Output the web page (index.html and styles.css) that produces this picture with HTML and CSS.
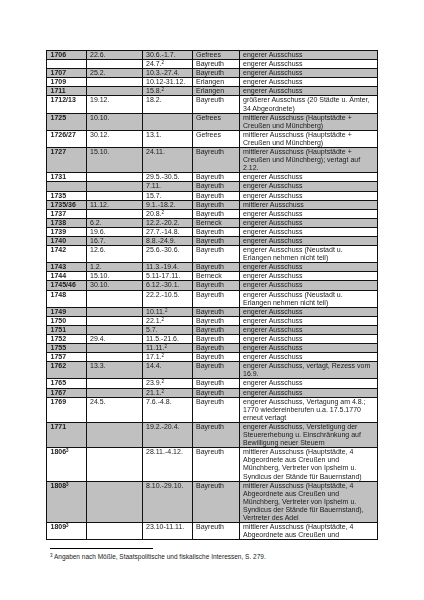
FILE: index.html
```html
<!DOCTYPE html>
<html lang="de">
<head>
<meta charset="utf-8">
<title>Landtage</title>
<link rel="stylesheet" href="styles.css">
</head>
<body>
<div class="page">
<table class="tbl">
<colgroup><col class="c1"><col class="c2"><col class="c3"><col class="c4"><col class="c5"></colgroup>
<tr class="g"><td class="y">1706</td><td>22.6.</td><td>30.6.-1.7.</td><td>Gefrees</td><td>engerer Ausschuss</td></tr>
<tr><td class="y"></td><td></td><td>24.7.<sup>2</sup></td><td>Bayreuth</td><td>engerer Ausschuss</td></tr>
<tr class="g"><td class="y">1707</td><td>25.2.</td><td>10.3.-27.4.</td><td>Bayreuth</td><td>engerer Ausschuss</td></tr>
<tr><td class="y">1709</td><td></td><td>10.12-31.12.</td><td>Erlangen</td><td>engerer Ausschuss</td></tr>
<tr class="g"><td class="y">1711</td><td></td><td>15.8.<sup>2</sup></td><td>Erlangen</td><td>engerer Ausschuss</td></tr>
<tr><td class="y">1712/13</td><td>19.12.</td><td>18.2.</td><td>Bayreuth</td><td>größerer Ausschuss (20 Städte u. Ämter,<br>34 Abgeordnete)</td></tr>
<tr class="g"><td class="y">1725</td><td>10.10.</td><td></td><td>Gefrees</td><td>mittlerer Ausschuss (Hauptstädte +<br>Creußen und Münchberg)</td></tr>
<tr><td class="y">1726/27</td><td>30.12.</td><td>13.1.</td><td>Gefrees</td><td>mittlerer Ausschuss (Hauptstädte +<br>Creußen und Münchberg)</td></tr>
<tr class="g"><td class="y">1727</td><td>15.10.</td><td>24.11.</td><td>Bayreuth</td><td>mittlerer Ausschuss (Hauptstädte +<br>Creußen und Münchberg); vertagt auf<br>2.12.</td></tr>
<tr><td class="y">1731</td><td></td><td>29.5.-30.5.</td><td>Bayreuth</td><td>engerer Ausschuss</td></tr>
<tr class="g"><td class="y"></td><td></td><td>7.11.</td><td>Bayreuth</td><td>engerer Ausschuss</td></tr>
<tr><td class="y">1735</td><td></td><td>15.7.</td><td>Bayreuth</td><td>engerer Ausschuss</td></tr>
<tr class="g"><td class="y">1735/36</td><td>11.12.</td><td>9.1.-18.2.</td><td>Bayreuth</td><td>mittlerer Ausschuss</td></tr>
<tr><td class="y">1737</td><td></td><td>20.8.<sup>2</sup></td><td>Bayreuth</td><td>engerer Ausschuss</td></tr>
<tr class="g"><td class="y">1738</td><td>6.2.</td><td>12.2.-20.2.</td><td>Berneck</td><td>engerer Ausschuss</td></tr>
<tr><td class="y">1739</td><td>19.6.</td><td>27.7.-14.8.</td><td>Bayreuth</td><td>engerer Ausschuss</td></tr>
<tr class="g"><td class="y">1740</td><td>16.7.</td><td>8.8.-24.9.</td><td>Bayreuth</td><td>engerer Ausschuss</td></tr>
<tr><td class="y">1742</td><td>12.6.</td><td>25.6.-30.6.</td><td>Bayreuth</td><td>engerer Ausschuss (Neustadt u.<br>Erlangen nehmen nicht teil)</td></tr>
<tr class="g"><td class="y">1743</td><td>1.2.</td><td>11.3.-19.4.</td><td>Bayreuth</td><td>engerer Ausschuss</td></tr>
<tr><td class="y">1744</td><td>15.10.</td><td>5.11-17.11.</td><td>Berneck</td><td>engerer Ausschuss</td></tr>
<tr class="g"><td class="y">1745/46</td><td>30.10.</td><td>6.12.-30.1.</td><td>Bayreuth</td><td>engerer Ausschuss</td></tr>
<tr><td class="y">1748</td><td></td><td>22.2.-10.5.</td><td>Bayreuth</td><td>engerer Ausschuss (Neustadt u.<br>Erlangen nehmen nicht teil)</td></tr>
<tr class="g"><td class="y">1749</td><td></td><td>10.11.<sup>2</sup></td><td>Bayreuth</td><td>engerer Ausschuss</td></tr>
<tr><td class="y">1750</td><td></td><td>22.1.<sup>2</sup></td><td>Bayreuth</td><td>engerer Ausschuss</td></tr>
<tr class="g"><td class="y">1751</td><td></td><td>5.7.</td><td>Bayreuth</td><td>engerer Ausschuss</td></tr>
<tr><td class="y">1752</td><td>29.4.</td><td>11.5.-21.6.</td><td>Bayreuth</td><td>engerer Ausschuss</td></tr>
<tr class="g"><td class="y">1755</td><td></td><td>11.11.<sup>2</sup></td><td>Bayreuth</td><td>engerer Ausschuss</td></tr>
<tr><td class="y">1757</td><td></td><td>17.1.<sup>2</sup></td><td>Bayreuth</td><td>engerer Ausschuss</td></tr>
<tr class="g"><td class="y">1762</td><td>13.3.</td><td>14.4.</td><td>Bayreuth</td><td>engerer Ausschuss, vertagt, Rezess vom<br>16.9.</td></tr>
<tr><td class="y">1765</td><td></td><td>23.9.<sup>2</sup></td><td>Bayreuth</td><td>engerer Ausschuss</td></tr>
<tr class="g"><td class="y">1767</td><td></td><td>21.1.<sup>2</sup></td><td>Bayreuth</td><td>engerer Ausschuss</td></tr>
<tr><td class="y">1769</td><td>24.5.</td><td>7.6.-4.8.</td><td>Bayreuth</td><td>engerer Ausschuss, Vertagung am 4.8.;<br>1770 wiedereinberufen u.a. 17.5.1770<br>erneut vertagt</td></tr>
<tr class="g"><td class="y">1771</td><td></td><td>19.2.-20.4.</td><td>Bayreuth</td><td>engerer Ausschuss, Verstetigung der<br>Steuererhebung u. Einschränkung auf<br>Bewilligung neuer Steuern</td></tr>
<tr><td class="y">1806<sup>3</sup></td><td></td><td>28.11.-4.12.</td><td>Bayreuth</td><td>mittlerer Ausschuss (Hauptstädte, 4<br>Abgeordnete aus Creußen und<br>Münchberg, Vertreter von Ipsheim u.<br>Syndicus der Stände für Bauernstand)</td></tr>
<tr class="g"><td class="y">1808<sup>3</sup></td><td></td><td>8.10.-29.10.</td><td>Bayreuth</td><td>mittlerer Ausschuss (Hauptstädte, 4<br>Abgeordnete aus Creußen und<br>Münchberg, Vertreter von Ipsheim u.<br>Syndicus der Stände für Bauernstand),<br>Vertreter des Adel</td></tr>
<tr><td class="y">1809<sup>3</sup></td><td></td><td>23.10-11.11.</td><td>Bayreuth</td><td>mittlerer Ausschuss (Hauptstädte, 4<br>Abgeordnete aus Creußen und</td></tr>
</table>
<div class="footnotes">
<div class="rule"></div>
<p class="fn"><sup>3</sup> Angaben nach Mößle, Staatspolitische und fiskalische Interessen, S. 279.</p>
</div>
</div>
</body>
</html>
```

FILE: styles.css
```css
html, body {
  margin: 0;
  padding: 0;
  background: #fff;
}
.page {
  padding: 50px 0 0 46px;
  font-family: "Liberation Sans", Arial, sans-serif;
  color: #1a1a1a;
}
.tbl {
  border-collapse: collapse;
  table-layout: fixed;
  width: 331px;
  border: 1.5px solid #000;
  font-size: 7px;
  line-height: 8.1px;
  will-change: transform;
}
.c1 { width: 40px; }
.c2 { width: 56px; }
.c3 { width: 50px; }
.c4 { width: 47px; }
.c5 { width: 138px; }
.tbl td {
  border: 1px solid #111;
  padding: 0 2px 0 3px;
  vertical-align: top;
  white-space: nowrap;
  overflow: hidden;
}
.tbl td.y {
  font-weight: bold;
  padding-left: 3.5px;
}
.tbl tr.g td {
  background: #c0c0c0;
}
.tbl sup {
  font-size: 4.5px;
  line-height: 0;
  vertical-align: 2.5px;
}
.footnotes {
  padding: 8px 0 0 4px;
}
.rule {
  width: 103px;
  border-top: 1px solid #000;
}
.fn {
  margin: 4px 0 0;
  font-size: 6.5px;
  line-height: 8px;
}
.fn sup {
  font-size: 4.5px;
  line-height: 0;
  vertical-align: 2.5px;
}
```
